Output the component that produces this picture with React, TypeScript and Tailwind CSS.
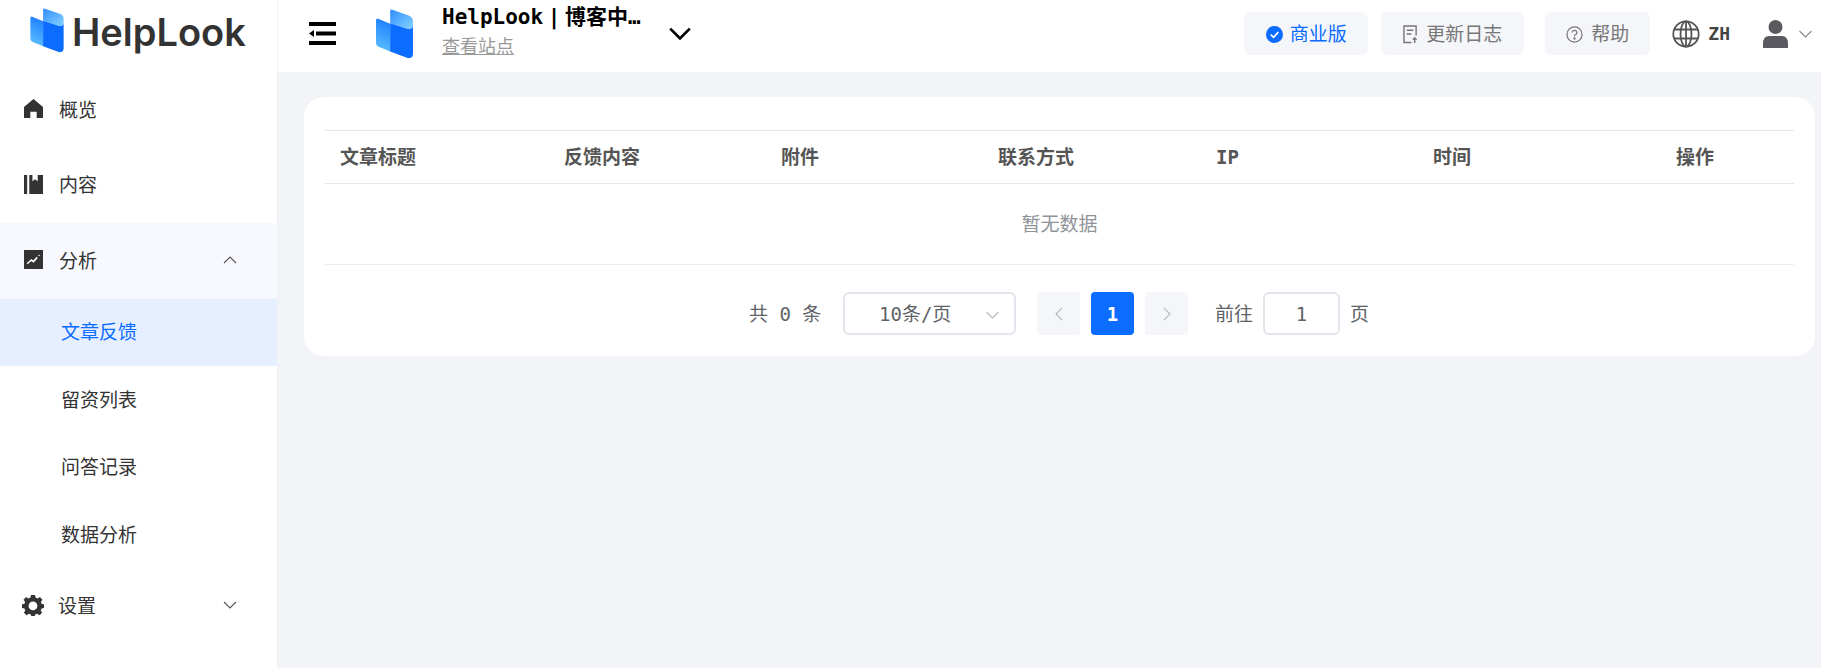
import React from "react";

const FONT = "[font-family:'DejaVu_Sans_Mono','Noto_Sans_CJK_SC',monospace]";

function Mark({ id, className }: { id: string; className: string }) {
  return (
    <svg viewBox="0 0 34 46" className={className}>
      <defs>
        <linearGradient id={id + "a"} x1="0.5" y1="0" x2="0.3" y2="1">
          <stop offset="0" stopColor="#1d80ff" />
          <stop offset="1" stopColor="#5cc0ff" />
        </linearGradient>
        <linearGradient id={id + "b"} x1="0" y1="0" x2="1" y2="1">
          <stop offset="0" stopColor="#2f8eff" />
          <stop offset="1" stopColor="#86d2ff" />
        </linearGradient>
      </defs>
      <path d="M2 9 L13 13.5 V39 L3 35 Q0 34 0 31 V11 Q0 8 2 9Z" fill={`url(#${id}a)`} />
      <path d="M13 2 Q13 0 15 0.8 L30 6 Q34 7.5 34 11 V14 Q34 20 28 18 L13 13Z" fill={`url(#${id}b)`} />
      <path d="M13 13 L28 18 Q34 20 34 14 V41 Q34 46 29 45 L13 39Z" fill="#0b6cff" />
    </svg>
  );
}

function Collapse() {
  return (
    <svg viewBox="0 0 27 23" className="h-[23px] w-[27px]">
      <rect x="0" y="0" width="27" height="4" fill="#000" />
      <rect x="7" y="9.5" width="20" height="4" fill="#000" />
      <rect x="0" y="19" width="27" height="4" fill="#000" />
      <path d="M0 11.5 L5 8 V15Z" fill="#000" />
    </svg>
  );
}

function Chevron({ up, className }: { up?: boolean; className: string }) {
  return (
    <svg viewBox="0 0 14 8" fill="none" stroke="currentColor" strokeWidth="1.1" className={className}>
      <path d={up ? "M1 7 L7 1 L13 7" : "M1 1 L7 7 L13 1"} />
    </svg>
  );
}

function NavIcon({ name }: { name: string }) {
  const c = "h-[19px] w-[19px] shrink-0";
  if (name === "home")
    return (
      <svg viewBox="1 1 18 18" className={c} fill="#333">
        <path d="M10 1 L19 8.5 V19 H13 V13 H7 V19 H1 V8.5Z" />
      </svg>
    );
  if (name === "book")
    return (
      <svg viewBox="1 1 18 18" className={c} fill="#333">
        <path d="M1 1 H4 V19 H1Z M6 1 H9 V7 L11.5 5 L14 7 V1 H19 V19 H6Z" />
      </svg>
    );
  if (name === "chart")
    return (
      <svg viewBox="1 1 18 18" className={c}>
        <rect x="1" y="1" width="18" height="18" fill="#333" />
        <path d="M4 14 L8 10.5 L10 12 L13.5 8 M15 6.5 L15.6 5.8" fill="none" stroke="#fff" strokeWidth="1.5" />
      </svg>
    );
  return (
    <svg viewBox="0 0 20 20" className="-mx-[2px] h-[22px] w-[22px] shrink-0" fill="#333">
      <path
        fillRule="evenodd"
        d="M8.2 0.8 H11.8 L12.3 3.2 L14.2 4 L16.3 2.7 L18.6 5.2 L17.2 7.3 L17.9 9 L20 9.3 V12.7 L17.8 13.2 L17 15 L18.3 17 L15.8 19.3 L13.8 18 L12 18.7 L11.6 20 H8.4 L8 18.7 L6.2 18 L4.2 19.3 L1.7 17 L3 15 L2.2 13.2 L0 12.7 V9.3 L2.1 9 L2.8 7.3 L1.4 5.2 L3.7 2.7 L5.8 4 L7.7 3.2Z M10 6.8 A4 4 0 1 0 10 14.8 A4 4 0 1 0 10 6.8Z"
      />
    </svg>
  );
}

function NavRow({ icon, label, open, chevron }: { icon: string; label: string; open?: boolean; chevron?: "up" | "down" }) {
  return (
    <div className={`flex h-[75.5px] items-center pb-[2px] pl-[24px] pr-[40px] text-[#333] ${open ? "bg-[#f8f9fe]" : ""}`}>
      <NavIcon name={icon} />
      <span className="ml-[16px] flex-1 font-['Noto_Sans_CJK_SC'] text-[19px]">{label}</span>
      {chevron && <Chevron up={chevron === "up"} className="h-[8px] w-[14px] text-[#555]" />}
    </div>
  );
}

function SubRow({ label, active }: { label: string; active?: boolean }) {
  return (
    <div className={`flex h-[67.5px] items-center pb-[2px] pl-[61px] font-['Noto_Sans_CJK_SC'] text-[19px] ${active ? "bg-[#e5efff] text-[#0b6cff]" : "text-[#333]"}`}>
      {label}
    </div>
  );
}

function Sidebar() {
  return (
    <aside className="w-[278px] shrink-0 border-r border-[#f0f1f4] bg-white">
      <div className="flex h-[72px] items-start pl-[30px] pt-[8px]">
        <Mark id="l1" className="h-[45px] w-[34px]" />
        <span className="ml-[8px] mt-[-1px] font-['Inter'] text-[38px] font-semibold leading-[50px] text-[#333]">HelpLook</span>
      </div>
      <NavRow icon="home" label="概览" />
      <NavRow icon="book" label="内容" />
      <NavRow icon="chart" label="分析" open chevron="up" />
      <SubRow label="文章反馈" active />
      <SubRow label="留资列表" />
      <SubRow label="问答记录" />
      <SubRow label="数据分析" />
      <NavRow icon="gear" label="设置" chevron="down" />
    </aside>
  );
}

function Pill({ children, className }: { children: React.ReactNode; className: string }) {
  return (
    <div className={`flex h-[43px] items-center justify-center rounded-[6px] bg-[#f5f6fa] pt-[2px] text-[19px] ${className}`}>{children}</div>
  );
}

function Header() {
  return (
    <header className="flex h-[72px] items-center bg-white pb-[5px] pl-[31px] pr-[8px]">
      <Collapse />
      <Mark id="l2" className="ml-[40px] h-[50px] w-[37px]" />
      <div className="-mt-[3px] ml-[29px] w-[203px]">
        <div className="whitespace-nowrap text-[21px] font-bold leading-[28px] text-black [word-spacing:-8px]">HelpLook | 博客中…</div>
        <div className="pt-[2px] text-[18px] leading-[28px] text-[#999] underline">查看站点</div>
      </div>
      <Chevron className="ml-[23px] h-[13px] w-[24px] text-black [&_path]:[stroke-width:1.7]" />

      <div className="flex-1" />

      <Pill className="w-[124px] gap-[7px] text-[#0b6cff]">
        <svg viewBox="0 0 18 18" className="h-[17px] w-[17px]">
          <circle cx="9" cy="9" r="9" fill="#0b6cff" />
          <path d="M5 9.2 L8 12 L13 6.5" fill="none" stroke="#fff" strokeWidth="1.8" />
        </svg>
        商业版
      </Pill>
      <Pill className="ml-[13px] w-[143px] gap-[8px] text-[#777]">
        <svg viewBox="0 0 16 20" fill="none" stroke="#777" strokeWidth="1.5" className="h-[19px] w-[15px]">
          <path d="M9 18.5 H1 V1 H14 V11 M4 5.5 H11 M4 9.5 H9" />
          <path d="M12.5 19 V13.5 M10.5 15.5 L12.5 13.5 L14.5 15.5" />
        </svg>
        更新日志
      </Pill>
      <Pill className="ml-[21px] w-[105px] gap-[8px] text-[#777]">
        <svg viewBox="0 0 18 18" fill="none" stroke="#777" strokeWidth="1.3" className="h-[17px] w-[17px]">
          <circle cx="9" cy="9" r="8" />
          <path d="M6.6 7 A2.4 2.4 0 1 1 9.8 9.3 Q9 9.7 9 11" />
          <circle cx="9" cy="13.2" r="0.6" fill="#777" />
        </svg>
        帮助
      </Pill>
      <svg viewBox="0 0 28 28" fill="none" stroke="#555" strokeWidth="1.8" className="ml-[22px] h-[28px] w-[28px]">
        <circle cx="14" cy="14" r="12.7" />
        <ellipse cx="14" cy="14" rx="5.5" ry="12.7" />
        <path d="M14 1.3 V26.7 M2.5 9.5 H25.5 M2.5 18.5 H25.5" />
      </svg>
      <span className="ml-[8px] text-[18px] font-bold text-[#444]">ZH</span>
      <svg viewBox="0 0 25 28" className="ml-[33px] h-[28px] w-[25px]" fill="#5a5a60">
        <circle cx="12.5" cy="7" r="7" />
        <path d="M0 24 Q0 16 6 16 H19 Q25 16 25 24 V28 H0Z" />
      </svg>
      <Chevron className="ml-[10px] h-[8px] w-[15px] text-[#888]" />
    </header>
  );
}

const cols = ["文章标题", "反馈内容", "附件", "联系方式", "IP", "时间", "操作"];

function Pagination() {
  return (
    <div className="flex h-[91px] items-start pl-[424px] pt-[27px] text-[19px] text-[#606266]">
      <div className="flex h-[43px] w-[94px] items-center whitespace-pre pt-[2px]">共 0 条</div>
      <div className="flex h-[43px] w-[173px] items-center justify-between rounded-[6px] border-2 border-[#e3e5ec] pl-[34px] pr-[14px] pt-[2px]">
        <span>10条/页</span>
        <Chevron className="h-[8px] w-[15px] text-[#b5b8c0]" />
      </div>
      <div className="ml-[21px] flex h-[43px] w-[43px] items-center justify-center rounded-[4px] bg-[#f5f6fa]">
        <Chevron className="h-[14px] w-[14px] rotate-90 text-[#b5b8c0]" />
      </div>
      <div className="ml-[11px] flex h-[43px] w-[43px] items-center justify-center rounded-[4px] bg-[#0b6cff] pt-[2px] font-bold text-white">1</div>
      <div className="ml-[11px] flex h-[43px] w-[43px] items-center justify-center rounded-[4px] bg-[#f5f6fa]">
        <Chevron className="h-[14px] w-[14px] -rotate-90 text-[#b5b8c0]" />
      </div>
      <div className="ml-[27px] flex h-[43px] items-center pt-[2px]">前往</div>
      <div className="ml-[10px] flex h-[43px] w-[77px] items-center justify-center rounded-[6px] border-2 border-[#e3e5ec] pt-[2px]">1</div>
      <div className="ml-[10px] flex h-[43px] items-center pt-[2px]">页</div>
    </div>
  );
}

function Card() {
  return (
    <section className="rounded-[20px] bg-white px-[21px] pt-[33px]">
      <div className="grid h-[54px] grid-cols-[224px_217px_217px_218px_217px_243px_134px] items-center border-y border-[#e6e7ea] text-[19px] font-bold text-[#555]">
        {cols.map((c) => (
          <div key={c} className="pl-[15px]">{c}</div>
        ))}
      </div>
      <div className="flex h-[81px] items-center justify-center border-b border-[#ebeef5] text-[19px] text-[#909399]">暂无数据</div>
      <Pagination />
    </section>
  );
}

export default function App() {
  return (
    <div className={`flex h-[668px] w-[1821px] overflow-hidden bg-[#f3f4f8] ${FONT}`}>
      <Sidebar />
      <div className="flex min-w-0 flex-1 flex-col">
        <Header />
        <main className="pl-[26px] pr-[6px] pt-[25px]">
          <Card />
        </main>
      </div>
    </div>
  );
}
